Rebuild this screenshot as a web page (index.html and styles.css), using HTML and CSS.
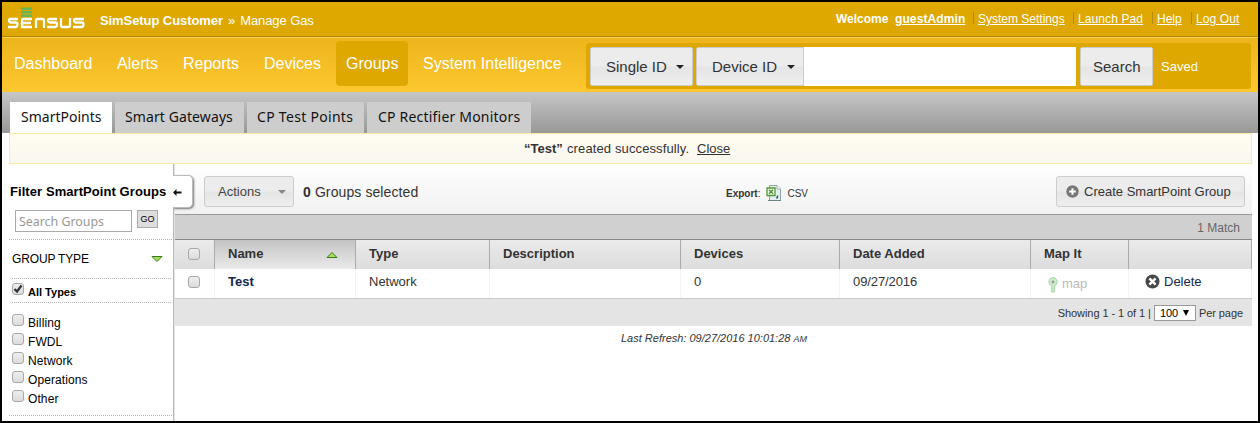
FILE: index.html
```html
<!DOCTYPE html>
<html lang="en">
<head>
<meta charset="utf-8">
<title>Manage Gas</title>
<link rel="stylesheet" href="styles.css">
</head>
<body>
<div class="frame">
  <header class="topbar">
    <svg class="logo" width="78" height="22" viewBox="0 0 78 22" fill="none" stroke="#fff" stroke-width="2.300" role="img" aria-label="Sensus">
      <path stroke="#69b456" stroke-width="2.600" d="M13 1.700h11M13 5.200h11M13 8.700h11"/>
      <path d="M10 12H2.500Q1 12 1 13.500T2.500 15.500H8Q9.500 15.500 9.500 17.500T8 20H0M24 12H15Q14 12 14 13.500V20H24M14 16H23M28 21V13.500Q28 12 29.500 12H34.500Q36 12 36 13.500V21M49 12H41.500Q40 12 40 13.500T41.500 15.500H47.500Q49 15.500 49 17.500T47.500 20H39M53 11V18.500Q53 20 54.500 20H60.500Q62 20 62 18.500V11M76 12H67.500Q66 12 66 13.500T67.500 15.500H74Q75.500 15.500 75.500 17.500T74 20H65"/>
    </svg>
    <div class="crumb"><b>SimSetup Customer</b> <span>»</span> <span>Manage Gas</span></div>
    <div class="user">
      <b>Welcome</b><a class="me">guestAdmin</a>
      <a class="item settings">System Settings</a><a class="item launch">Launch Pad</a><a class="item help">Help</a><a class="item logout">Log Out</a>
    </div>
  </header>
  <nav class="mainnav">
    <a class="n1">Dashboard</a><a class="n2">Alerts</a><a class="n3">Reports</a><a class="n4">Devices</a><a class="n5 active">Groups</a><a class="n6">System Intelligence</a>
    <div class="search">
      <button class="sbtn single">Single ID<i class="caret"></i></button>
      <button class="sbtn device">Device ID<i class="caret"></i></button>
      <input class="query" type="text" aria-label="Search">
      <button class="sbtn go-search">Search</button>
      <a class="saved">Saved</a>
    </div>
  </nav>
  <div class="tabs">
    <a class="tab t1 active">SmartPoints</a><a class="tab t2">Smart Gateways</a><a class="tab t3">CP Test Points</a><a class="tab t4">CP Rectifier Monitors</a>
  </div>
  <div class="notice"><b>“Test”</b><span>created successfully.</span><a>Close</a></div>
  <div class="body">
    <aside class="side">
      <h2>Filter SmartPoint Groups</h2>
      <div class="find"><input type="text" placeholder="Search Groups"><button>GO</button></div>
      <div class="gtype"><span>GROUP TYPE</span>
        <svg width="12" height="8" viewBox="0 0 12 8"><path d="M1 1.500H11L6 6.500Z" fill="#a5e05c" stroke="#3d7a1d"/></svg></div>
      <div class="all"><i class="cb on"><svg width="10" height="10" viewBox="0 0 10 10"><path d="M1.500 5L4 7.500L8.500 1.500" fill="none" stroke="#333" stroke-width="2.200"/></svg></i><b>All Types</b></div>
      <ul class="types">
        <li><i class="cb"></i>Billing</li><li><i class="cb"></i>FWDL</li><li><i class="cb"></i>Network</li><li><i class="cb"></i>Operations</li><li><i class="cb"></i>Other</li>
      </ul>
      <div class="collapse"><svg width="9" height="7" viewBox="0 0 9 7"><path d="M0 3.500L3.500 0V2.500H8.500V4.500H3.500V7Z" fill="#111"/></svg></div>
    </aside>
    <main class="main">
      <div class="toolbar">
        <button class="btn actions">Actions<i class="caret"></i></button>
        <div class="selected"><b>0</b> Groups selected</div>
        <div class="export"><b>Export</b>:
          <svg width="16" height="17" viewBox="0 0 16 17">
            <path d="M3.500.5H11L14.500 4V15.500H3.500Z" fill="#e4eef0" stroke="#8ca4a5"/>
            <path d="M11 .5V4H14.500" fill="#fff" stroke="#9fb5b5"/>
            <path d="M2 15.500H15" stroke="#6d8585"/>
            <path d="M1 3H9V10.500H1Z" fill="#f0fae9" stroke="#559637" stroke-width="1.300"/>
            <path d="M3 4.700L7 8.800M7 4.700L3 8.800" stroke="#4b9130" stroke-width="1.300"/>
            <path d="M11.500 10.500V12L10.500 13.500" fill="none" stroke="#425461" stroke-width="1.500"/>
          </svg><span>CSV</span></div>
        <button class="btn create"><svg width="13" height="13" viewBox="0 0 13 13"><circle cx="6.500" cy="6.500" r="6.200" fill="#777"/><path d="M6.500 3.200V9.800M3.200 6.500H9.800" stroke="#fff" stroke-width="2"/></svg><span>Create SmartPoint Group</span></button>
      </div>
      <div class="match">1 Match</div>
      <div class="row head">
        <div class="check"><i class="cb"></i></div>
        <div class="sorted">Name<svg width="12" height="8" viewBox="0 0 12 8"><path d="M1 6.500H11L6 1.500Z" fill="#a5e05c" stroke="#3d7a1d"/></svg></div>
        <div>Type</div><div>Description</div><div>Devices</div><div>Date Added</div><div>Map It</div><div></div>
      </div>
      <div class="row data">
        <div class="check"><i class="cb"></i></div>
        <div class="name">Test</div><div>Network</div><div></div><div>0</div><div class="date">09/27/2016</div>
        <div class="map"><svg width="10" height="16" viewBox="0 0 10 16"><path d="M5 .6A4.200 4.200 0 0 1 8.500 7L6.400 9.500V15H3.600V9.500L1.500 7A4.200 4.200 0 0 1 5 .6Z" fill="#cdeccb" stroke="#a4d5a2"/><circle cx="5" cy="5" r="1.400" fill="#999"/></svg><span>map</span></div>
        <div class="del"><svg width="15" height="15" viewBox="0 0 15 15"><circle cx="7.500" cy="7.500" r="7" fill="#484848"/><path d="M4.400 4.400L10.600 10.600M10.600 4.400L4.400 10.600" stroke="#fff" stroke-width="2.400"/></svg><span>Delete</span></div>
      </div>
      <div class="pager"><span class="showing">Showing 1 - 1 of 1 |</span><span class="size">100<i></i></span><span>Per page</span></div>
      <div class="refresh">Last Refresh: 09/27/2016 10:01:28 <small>AM</small></div>
    </main>
  </div>
</div>
</body>
</html>
```
FILE: styles.css
```css
* { box-sizing: border-box; }
body { margin: 0; font: 13px "Liberation Sans", Arial, sans-serif; color: #333; }
button, input { font: inherit; color: inherit; margin: 0; }
.frame { width: 1260px; height: 423px; border: 2px solid #000; background: #fff; overflow: hidden; white-space: nowrap; }
.frame svg { display: block; flex: none; }

.topbar { display: flex; height: 35px; padding-left: 6px; background: #dfa800; border-bottom: 1px solid #ad8309; color: #fff; font-size: 12px; }
.logo { margin-top: 5px; }
.crumb { display: flex; gap: 5px; margin: 11px 0 0 14px; font-size: 13px; line-height: 15px; letter-spacing: -.08px; }
.crumb b { width: 123px; }
.user { display: flex; margin: 10px 0 0 auto; padding-right: 19px; line-height: 14px; }
.user a { text-decoration: underline; }
.user > b { width: 59px; }
.me { width: 78px; font-weight: bold; letter-spacing: .1px; }
.item { height: 12px; padding-left: 4px; border-left: 1px solid #b58a0c; text-decoration-color: #fff; }
.settings { width: 100px; }
.launch { width: 79px; letter-spacing: .1px; }
.help { width: 39px; }
.logout { width: 48px; letter-spacing: .1px; }

.mainnav { display: flex; height: 55px; padding: 3px 7px 0 2px; border-top: 1px solid #ffd04a; background: linear-gradient(#edb51c, #fdc72f); color: #fff; font-size: 16px; }
.mainnav > a { height: 45px; padding-left: 10px; line-height: 46px; }
.n1 { width: 103px; }
.n2 { width: 66px; }
.n3 { width: 81px; }
.n4 { width: 82px; }
.n5 { width: 72px; margin-right: 5px; border-radius: 4px; }
.mainnav .active { background: #dfa800; }
.n6 { width: 173px; }
.search { display: flex; width: 665px; height: 46px; margin-top: 2px; padding: 4px; border-radius: 3px; background: #dfa800; }
.sbtn { display: flex; align-items: center; height: 39px; padding: 0; border: 1px solid #ccc; border-radius: 2px; background: linear-gradient(#ececec 49%, #e4e4e4 51%, #efefef); font-size: 15px; color: #333; }
.caret { border: 4px solid transparent; border-top-color: #222; border-bottom: 0; }
.single { width: 103px; margin-right: 3px; padding-left: 15px; }
.device { width: 108px; padding-left: 15px; border-radius: 2px 0 0 2px; }
.single .caret, .device .caret { margin-left: auto; margin-right: 8px; }
.query { width: 272px; height: 39px; border: 0; background: #fff; }
.go-search { width: 73px; margin-left: 4px; padding-left: 12px; }
.saved { margin: 12px 0 0 8px; font-size: 13px; line-height: 16px; }

.tabs { display: flex; gap: 3px; height: 41px; padding: 10px 0 0 8px; background: linear-gradient(#c6c6c6, #989898); }
.tab { height: 31px; padding-left: 10px; background: #cdcdcd; color: #111; font: 14px/30px "Noto Sans", sans-serif; letter-spacing: .1px; }
.tab.active { padding-left: 11px; background: #fff; letter-spacing: 0; }
.t1 { width: 102px; }
.t2 { width: 129px; }
.t3 { width: 117px; }
.tab.t3 { letter-spacing: .3px; }
.t4 { width: 164px; }
.tab.t4 { padding-left: 11px; letter-spacing: .2px; }

.notice { display: flex; width: 1243px; height: 31px; margin-left: 7px; padding: 7px 0 0 514px; border: 1px solid #fbeb9a; background: linear-gradient(#fffcf1, #f9f7ef); line-height: 15px; }
.notice b { width: 43px; }
.notice span { width: 130px; letter-spacing: .12px; }
.notice a { text-decoration: underline; }

.body { display: flex; height: 257px; padding-left: 7px; }
.side { position: relative; width: 166px; height: 257px; border-right: 1px solid #e4e4e4; box-shadow: inset -1px 0 #b8b8b8; color: #000; }
.side h2 { margin: 0; padding: 20px 0 0 1px; font-size: 13px; line-height: 15px; letter-spacing: .07px; }
.find { display: flex; gap: 5px; height: 41px; padding: 11px 0 0 6px; border-bottom: 1px dotted #b5b5b5; }
.find input { width: 117px; height: 22px; padding: 1px 3px; border: 1px solid #aaa; font: 12.400px "Noto Sans", sans-serif; }
.find input::placeholder { color: #999; opacity: 1; }
.find button { width: 21px; height: 18px; padding: 0; border: 1px solid #aaa; background: #ddd; font-size: 9px; }
.gtype { display: flex; align-items: center; height: 39px; margin: 0 3px; padding-right: 8px; border-bottom: 1px dotted #b5b5b5; font-size: 12px; }
.gtype span { letter-spacing: -.15px; }
.gtype svg { margin-left: auto; }
.all { display: flex; height: 24px; margin: 0 3px; padding-top: 4px; border-bottom: 1px dotted #b5b5b5; }
.all b { padding: 3px 0 0 4px; font-size: 11px; line-height: 13px; }
.cb { display: block; flex: none; width: 12px; height: 12px; border: 1px solid #a8a8a8; border-radius: 3px; background: linear-gradient(#eee, #dcdcdc); }
.types { height: 113px; margin: 0; padding: 11px 0 0 3px; border-bottom: 1px dotted #b5b5b5; list-style: none; font-size: 12px; }
.types li { display: flex; height: 19px; line-height: 18px; letter-spacing: .1px; }
.types .cb { margin-right: 4px; }
.collapse { position: absolute; left: 164px; top: 11px; width: 20px; height: 33px; padding-top: 13px; border: 1px solid #bbb; border-left: 0; border-radius: 0 5px 5px 0; background: #fff; box-shadow: 1px 1px 2px #777; clip-path: inset(-2px -5px -5px 0); }

.main { width: 1077px; }
.toolbar { display: flex; height: 51px; padding-top: 12px; border-bottom: 1px solid #999; background: linear-gradient(#fff, #f1f1f1); }
.btn { display: flex; align-items: center; height: 31px; padding: 0; border: 1px solid #ccc; border-radius: 3px; background: linear-gradient(#ececec 49%, #e4e4e4 51%, #efefef); font-size: 13px; }
.actions { width: 90px; margin-left: 29px; padding: 0 7px 0 13px; color: #444; }
.actions .caret { margin-left: auto; border-top-color: #888; }
.selected { width: 432px; padding: 8px 0 0 9px; font-size: 14px; line-height: 16px; letter-spacing: .1px; }
.export { display: flex; align-items: center; height: 35px; width: 330px; font-size: 10px; }
.export b { letter-spacing: 0; }
.export svg { margin: 0 5px 0 6px; }
.create { width: 189px; padding-left: 9px; }
.create span { padding-left: 5px; }
.match { height: 24px; padding: 5px 12px 0 0; background: #d0d0d0; color: #666; font-size: 12px; line-height: 16px; text-align: right; }
.row { display: grid; grid-template-columns: 40px 141px 134px 191px 159px 191px 98px 123px; height: 30px; }
.row > div { display: flex; align-items: center; padding-left: 13px; border-right: 1px solid #f3f3f3; }
.head { border-top: 1px solid #888; background: linear-gradient(#ebebeb, #dcdcdc); font-weight: bold; }
.row.head > div { padding-bottom: 2px; border-color: #aaa; }
.head .sorted { background: linear-gradient(#c4c4c4, #eaeaea); }
.sorted svg { margin: 2px 17px 0 auto; }
.data { border-bottom: 1px solid #c8c8c8; }
.data > div { padding-bottom: 4px; }
.name { color: #14284b; font-weight: bold; }
.date { letter-spacing: -.1px; }
.data > .map { gap: 4px; padding: 2px 0 0 17px; color: #bbb; }
.map span { padding-bottom: 2px; }
.data > .del { gap: 4px; padding-left: 16px; color: #14284b; }
.pager { display: flex; align-items: center; height: 27px; padding: 1px 9px 0 0; justify-content: flex-end; background: #e4e4e4; font-size: 11px; letter-spacing: -.07px; }
.size { display: flex; align-items: center; width: 42px; height: 16px; margin: 0 3px; padding-left: 5px; border: 1px solid #999; background: #fff; color: #000; }
.size i { margin-left: 5px; border: 3px solid transparent; border-top: 6px solid #000; border-bottom: 0; }
.refresh { padding: 6px 0 0 446px; font-size: 11px; line-height: 13px; font-style: italic; }
.refresh small { font-size: 9px; }
```
